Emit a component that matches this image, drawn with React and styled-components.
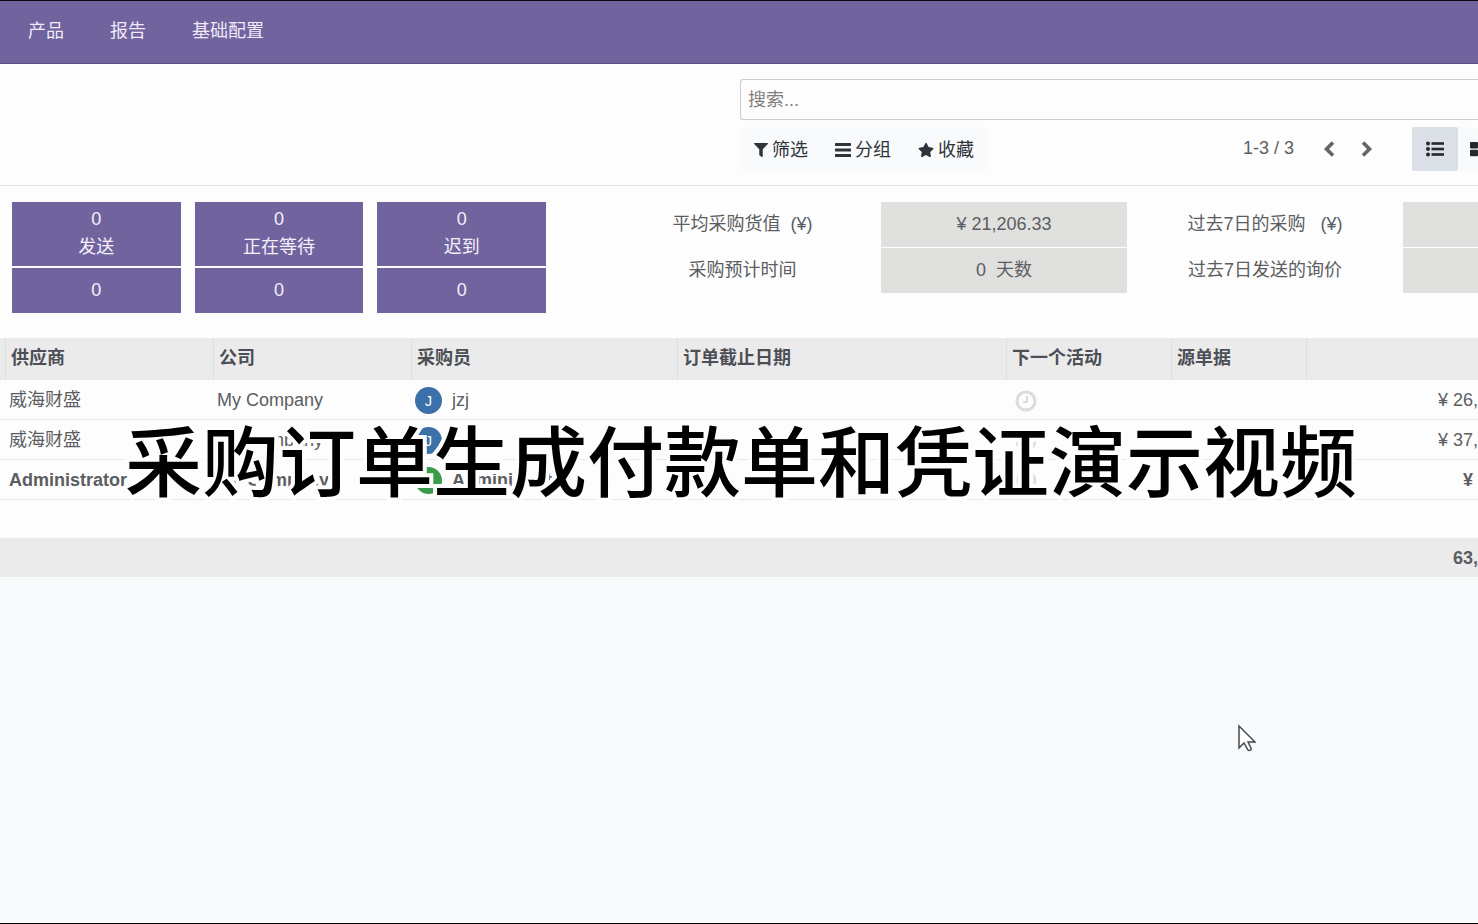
import React from "react";
import styled, { createGlobalStyle } from "styled-components";
import { FaFilter, FaStar } from "react-icons/fa";

const GlobalStyle = createGlobalStyle`
	* {
		box-sizing: border-box;
	}

	body {
		margin: 0;
		overflow-x: hidden;
		background-color: #f7fafb;
	}

	body, button, input {
		font-family: "Liberation Sans", "Noto Sans CJK SC", sans-serif;
		font-size: 18px;
		line-height: 28px;
		color: #5b5d62;
	}
`;

const Page = styled.div`
	position: relative;
	min-height: 100vh;
	overflow: hidden;
	border-top: 1px solid #0b0512;
	border-bottom: 1px solid #000;
`;

const Navbar = styled.nav`
	display: flex;
	align-items: center;
	gap: 46px;
	height: 63px;
	padding: 0 28px 2px;
	background-color: #71639e;
	border-bottom: 1px solid #5a4f80;

	a {
		color: #efeaf8;
		text-decoration: none;
	}
`;

const ControlPanel = styled.header`
	display: grid;
	grid-template-columns: 1fr 1fr;
	height: 122px;
	padding-top: 15px;
	background-color: #fdfdfd;
	border-bottom: 1px solid #e3e4e6;
`;

const SearchArea = styled.div`
	grid-column: 2;
	margin-left: 1px;
`;

const SearchInput = styled.input`
	display: block;
	width: 100%;
	height: 41px;
	padding: 2px 7px 0;
	background-color: #fdfdfd;
	border: 1px solid #ccc;
	border-right: none;
	border-radius: 3px 0 0 3px;
	outline: none;

	&::placeholder {
		color: #808080;
		opacity: 1;
	}
`;

const Tools = styled.div`
	display: flex;
	justify-content: space-between;
	margin-top: 7px;
`;

const FilterGroup = styled.div`
	display: flex;
	background-color: #f9fafb;
`;

const FilterButton = styled.button`
	display: flex;
	align-items: center;
	gap: 4px;
	height: 44px;
	padding: 2px 13px 0 14px;
	background: none;
	border: none;
	color: #30343a;
	cursor: pointer;
`;

const Pager = styled.div`
	display: flex;
	align-items: center;

	span {
		margin-right: 16px;
		padding-bottom: 2px;
	}
`;

const PagerButton = styled.button`
	display: flex;
	align-items: center;
	justify-content: center;
	width: 38px;
	height: 44px;
	padding: 0;
	background: none;
	border: none;
	color: #666;
	cursor: pointer;
`;

const ViewSwitch = styled.div`
	display: flex;
	margin-left: 26px;
`;

const ViewButton = styled.button`
	display: flex;
	align-items: center;
	justify-content: ${(props) => (props.$active ? "center" : "flex-start")};
	width: ${(props) => (props.$active ? 46 : 20)}px;
	height: 44px;
	padding: 0 0 0 ${(props) => (props.$active ? 0 : 12)}px;
	overflow: hidden;
	background-color: ${(props) => (props.$active ? "#dae0e5" : "#f9fafb")};
	border: none;
	border-radius: 2px;
	color: #25282c;
	cursor: pointer;

	svg {
		flex-shrink: 0;
	}
`;

const Dashboard = styled.section`
	display: flex;
	gap: 58px;
	padding: 16px 0 25px 12px;
	background-color: #fdfdfd;
`;

const Tiles = styled.div`
	display: grid;
	grid-template-columns: repeat(3, 1fr);
	gap: 2px 14px;
	width: 534px;
	flex-shrink: 0;
`;

const Tile = styled.button`
	height: ${(props) => (props.$tall ? 64 : 45)}px;
	padding: 0 0 ${(props) => (props.$tall ? 2 : 1)}px;
	background-color: #71639e;
	border: none;
	color: #f4f0fb;
	cursor: pointer;

	span {
		display: block;
	}
`;

const Stats = styled.div`
	display: grid;
	grid-template-columns: 277fr 246fr 276fr 75fr;
	grid-auto-rows: 45px;
	gap: 1px 0;
	flex: 1;
`;

const Stat = styled.div`
	display: flex;
	align-items: center;
	justify-content: center;
	padding-bottom: 2px;
	white-space: pre;
	background-color: ${(props) => (props.$filled ? "#e0e0df" : "transparent")};
`;

const Orders = styled.table`
	width: 100%;
	table-layout: fixed;
	border-collapse: separate;
	border-spacing: 0;
	background-color: #fdfdfd;

	th,
	td {
		height: 40px;
		padding: 0 0 0 4px;
		text-align: left;
		white-space: nowrap;
	}

	th {
		height: 42px;
		padding: 0 0 3px 5px;
		background-color: #ebebeb;
		border-left: 1px solid #dfdfdf;
		color: #4c4f55;
	}

	th:first-child {
		border-left: none;
	}

	tbody td {
		border-bottom: 1px solid #e6e7e8;
	}

	tbody .spacer td {
		height: 38px;
		border-bottom: none;
	}

	tfoot td {
		height: 39px;
		background-color: #ebebeb;
		font-weight: 700;
	}

	td.amount {
		padding-left: 0;
		text-align: right;
	}
`;

const OrderRow = styled.tr`
	font-weight: ${(props) => (props.$bold ? 700 : 400)};
`;

const Buyer = styled.div`
	display: flex;
	align-items: center;
	gap: 10px;
`;

const Avatar = styled.span`
	display: flex;
	align-items: center;
	justify-content: center;
	width: 27px;
	height: 27px;
	margin-top: 2px;
	border-radius: 50%;
	background-color: ${(props) => props.$color};
	color: #fff;
	font-size: 14px;
	font-weight: 400;
`;

const ActivityButton = styled.button`
	display: block;
	margin-left: 5px;
	padding: 3px 0 0;
	background: none;
	border: none;
	color: #dcdcdc;
	line-height: 0;
	cursor: pointer;
`;

const Caption = styled.div`
	position: absolute;
	inset: 0;
	display: flex;
	align-items: center;
	justify-content: center;
	padding: 0 0 8px 4px;
	pointer-events: none;
	font-family: "Noto Sans CJK SC", sans-serif;
	font-size: 77px;
	font-weight: 500;
	line-height: 100px;
	white-space: nowrap;
	color: #000;
	-webkit-text-stroke: 8px #fdfdfd;
	paint-order: stroke fill;
`;

const Pointer = styled.svg`
	position: absolute;
	top: 722px;
	left: 1237px;
`;

const tiles = ["发送", "正在等待", "迟到"];

const stats = [
	{ text: "平均采购货值  (¥)" },
	{ text: "¥ 21,206.33", filled: true },
	{ text: "过去7日的采购   (¥)" },
	{ text: "", filled: true },
	{ text: "采购预计时间" },
	{ text: "0  天数", filled: true },
	{ text: "过去7日发送的询价" },
	{ text: "", filled: true },
];

const widths = [5, 208, 198, 266, 329, 165, 135];

const headers = ["供应商", "公司", "采购员", "订单截止日期", "下一个活动", "源单据"];

const orders = [
	{ vendor: "威海财盛", buyer: "jzj", initial: "J", color: "#3c70a8", amount: "¥ 26," },
	{ vendor: "威海财盛", buyer: "jzj", initial: "J", color: "#3c70a8", amount: "¥ 37," },
	{
		vendor: "Administrator",
		buyer: "Administrator",
		initial: "A",
		color: "#3a9b4d",
		amount: "¥\u00a0",
		bold: true,
	},
];

const Clock = () => (
	<svg width="22" height="22" viewBox="0 0 22 22" fill="none" stroke="currentColor">
		<circle cx="11" cy="11" r="9" strokeWidth="3" />
		<path d="M12 6v6H8" strokeWidth="2" />
	</svg>
);

const Bars = () => (
	<svg width="16" height="16" viewBox="0 0 16 16" fill="currentColor">
		<rect y="1" width="16" height="3" rx="0.5" />
		<rect y="6.5" width="16" height="3" rx="0.5" />
		<rect y="12" width="16" height="3" rx="0.5" />
	</svg>
);

const Chevron = ({ d }) => (
	<svg width="14" height="18" viewBox="0 0 14 18" fill="none" stroke="currentColor">
		<path d={d} strokeWidth="3.6" />
	</svg>
);

const ListIcon = () => (
	<svg width="18" height="16" viewBox="0 0 18 16" fill="currentColor">
		<circle cx="2" cy="2.5" r="2" />
		<circle cx="2" cy="8" r="2" />
		<circle cx="2" cy="13.5" r="2" />
		<rect x="5.5" y="1.2" width="12.5" height="2.6" />
		<rect x="5.5" y="6.7" width="12.5" height="2.6" />
		<rect x="5.5" y="12.2" width="12.5" height="2.6" />
	</svg>
);

const KanbanIcon = () => (
	<svg width="18" height="16" viewBox="0 0 18 16" fill="currentColor">
		<rect y="1" width="8" height="6.5" rx="1" />
		<rect x="10" y="1" width="8" height="6.5" rx="1" />
		<rect y="8.7" width="8" height="6.5" rx="1" />
		<rect x="10" y="8.7" width="8" height="6.5" rx="1" />
	</svg>
);

const App = () => {
	return (
		<Page>
			<GlobalStyle />
			<Navbar>
				<a href="/">产品</a>
				<a href="/">报告</a>
				<a href="/">基础配置</a>
			</Navbar>
			<ControlPanel>
				<SearchArea>
					<SearchInput type="text" placeholder="搜索..." aria-label="搜索" />
					<Tools>
						<FilterGroup>
							<FilterButton>
								<FaFilter size={14} />
								筛选
							</FilterButton>
							<FilterButton>
								<Bars />
								分组
							</FilterButton>
							<FilterButton>
								<FaStar size={16} />
								收藏
							</FilterButton>
						</FilterGroup>
						<Pager>
							<span>1-3 / 3</span>
							<PagerButton aria-label="上一页">
								<Chevron d="M11 2.5L4.5 9l6.5 6.5" />
							</PagerButton>
							<PagerButton aria-label="下一页">
								<Chevron d="M3 2.5L9.5 9L3 15.5" />
							</PagerButton>
							<ViewSwitch>
								<ViewButton $active aria-label="列表">
									<ListIcon />
								</ViewButton>
								<ViewButton aria-label="看板">
									<KanbanIcon />
								</ViewButton>
							</ViewSwitch>
						</Pager>
					</Tools>
				</SearchArea>
			</ControlPanel>
			<Dashboard>
				<Tiles>
					{tiles.map((label) => (
						<Tile key={label} $tall>
							<span>0</span>
							<span>{label}</span>
						</Tile>
					))}
					{tiles.map((label) => (
						<Tile key={label}>0</Tile>
					))}
				</Tiles>
				<Stats>
					{stats.map((stat, i) => (
						<Stat key={i} $filled={stat.filled}>
							{stat.text}
						</Stat>
					))}
				</Stats>
			</Dashboard>
			<Orders>
				<colgroup>
					{widths.map((width, i) => (
						<col key={i} style={{ width }} />
					))}
					<col />
				</colgroup>
				<thead>
					<tr>
						<th />
						{headers.map((header) => (
							<th key={header}>{header}</th>
						))}
						<th />
					</tr>
				</thead>
				<tbody>
					{orders.map((order, i) => (
						<OrderRow key={i} $bold={order.bold}>
							<td />
							<td>{order.vendor}</td>
							<td>My Company</td>
							<td>
								<Buyer>
									<Avatar $color={order.color}>{order.initial}</Avatar>
									{order.buyer}
								</Buyer>
							</td>
							<td />
							<td>
								<ActivityButton aria-label="活动">
									<Clock />
								</ActivityButton>
							</td>
							<td />
							<td className="amount">{order.amount}</td>
						</OrderRow>
					))}
					<tr className="spacer">
						<td colSpan={8} />
					</tr>
				</tbody>
				<tfoot>
					<tr>
						<td colSpan={7} />
						<td className="amount">63,</td>
					</tr>
				</tfoot>
			</Orders>
			<Caption>采购订单生成付款单和凭证演示视频</Caption>
			<Pointer width="19" height="30" viewBox="0 0 19 30">
				<path
					d="M2 3v22l5-5 4 7c1 1 4 0 3-2l-3-6h7z"
					fill="#fff"
					stroke="#45484d"
					strokeWidth="1.5"
				/>
			</Pointer>
		</Page>
	);
};

export default App;
